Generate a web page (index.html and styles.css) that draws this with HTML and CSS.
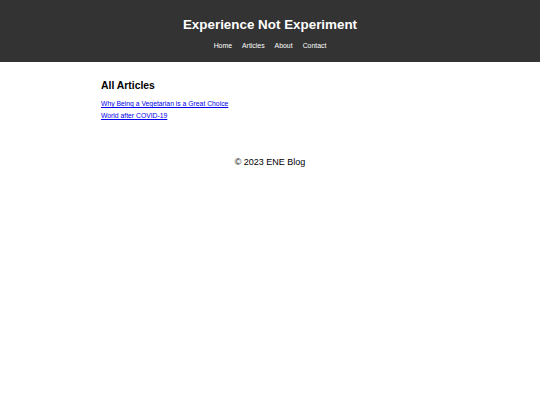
FILE: index.html
```html
<!DOCTYPE html>
<html>
<head>
<meta charset="utf-8">
<link rel="stylesheet" href="styles.css">
</head>
<body>
<header class="site-header">
  <h1 class="site-title">Experience Not Experiment</h1>
  <nav class="site-nav">
    <a href="#">Home</a>
    <a href="#">Articles</a>
    <a href="#">About</a>
    <a href="#">Contact</a>
  </nav>
</header>
<main class="content">
  <h2 class="section-title">All Articles</h2>
  <ul class="article-list">
    <li><a href="#">Why Being a Vegetarian is a Great Choice</a></li>
    <li><a href="#">World after COVID-19</a></li>
  </ul>
</main>
<footer class="site-footer">
  <p>&copy; 2023 ENE Blog</p>
</footer>
</body>
</html>
```
FILE: styles.css
```css
html, body {
  margin: 0;
  padding: 0;
  background: #fff;
  font-family: "Liberation Sans", Arial, sans-serif;
}
.site-header {
  background: #333;
  color: #fff;
  height: 62px;
  box-sizing: border-box;
  padding-top: 17px;
  text-align: center;
}
.site-title {
  margin: 0;
  font-size: 13.4px;
  line-height: 16px;
  font-weight: bold;
}
.site-nav {
  margin-top: 8px;
  display: flex;
  justify-content: center;
  gap: 10px;
  font-size: 6.9px;
  line-height: 9px;
}
.site-nav a {
  color: #fff;
  text-decoration: none;
}
.content {
  width: 338px;
  margin: 0 auto;
  padding-top: 17px;
}
.section-title {
  margin: 0 0 6px;
  font-size: 10.4px;
  line-height: 13px;
  font-weight: bold;
  color: #000;
}
.article-list {
  list-style: none;
  margin: 0;
  padding: 0;
  font-size: 6.8px;
  line-height: 12px;
}
.article-list a {
  color: #0000ee;
}
.site-footer {
  text-align: center;
  margin-top: 34px;
  font-size: 9px;
  line-height: 12px;
  color: #000;
}
.site-footer p {
  margin: 0;
}
```
